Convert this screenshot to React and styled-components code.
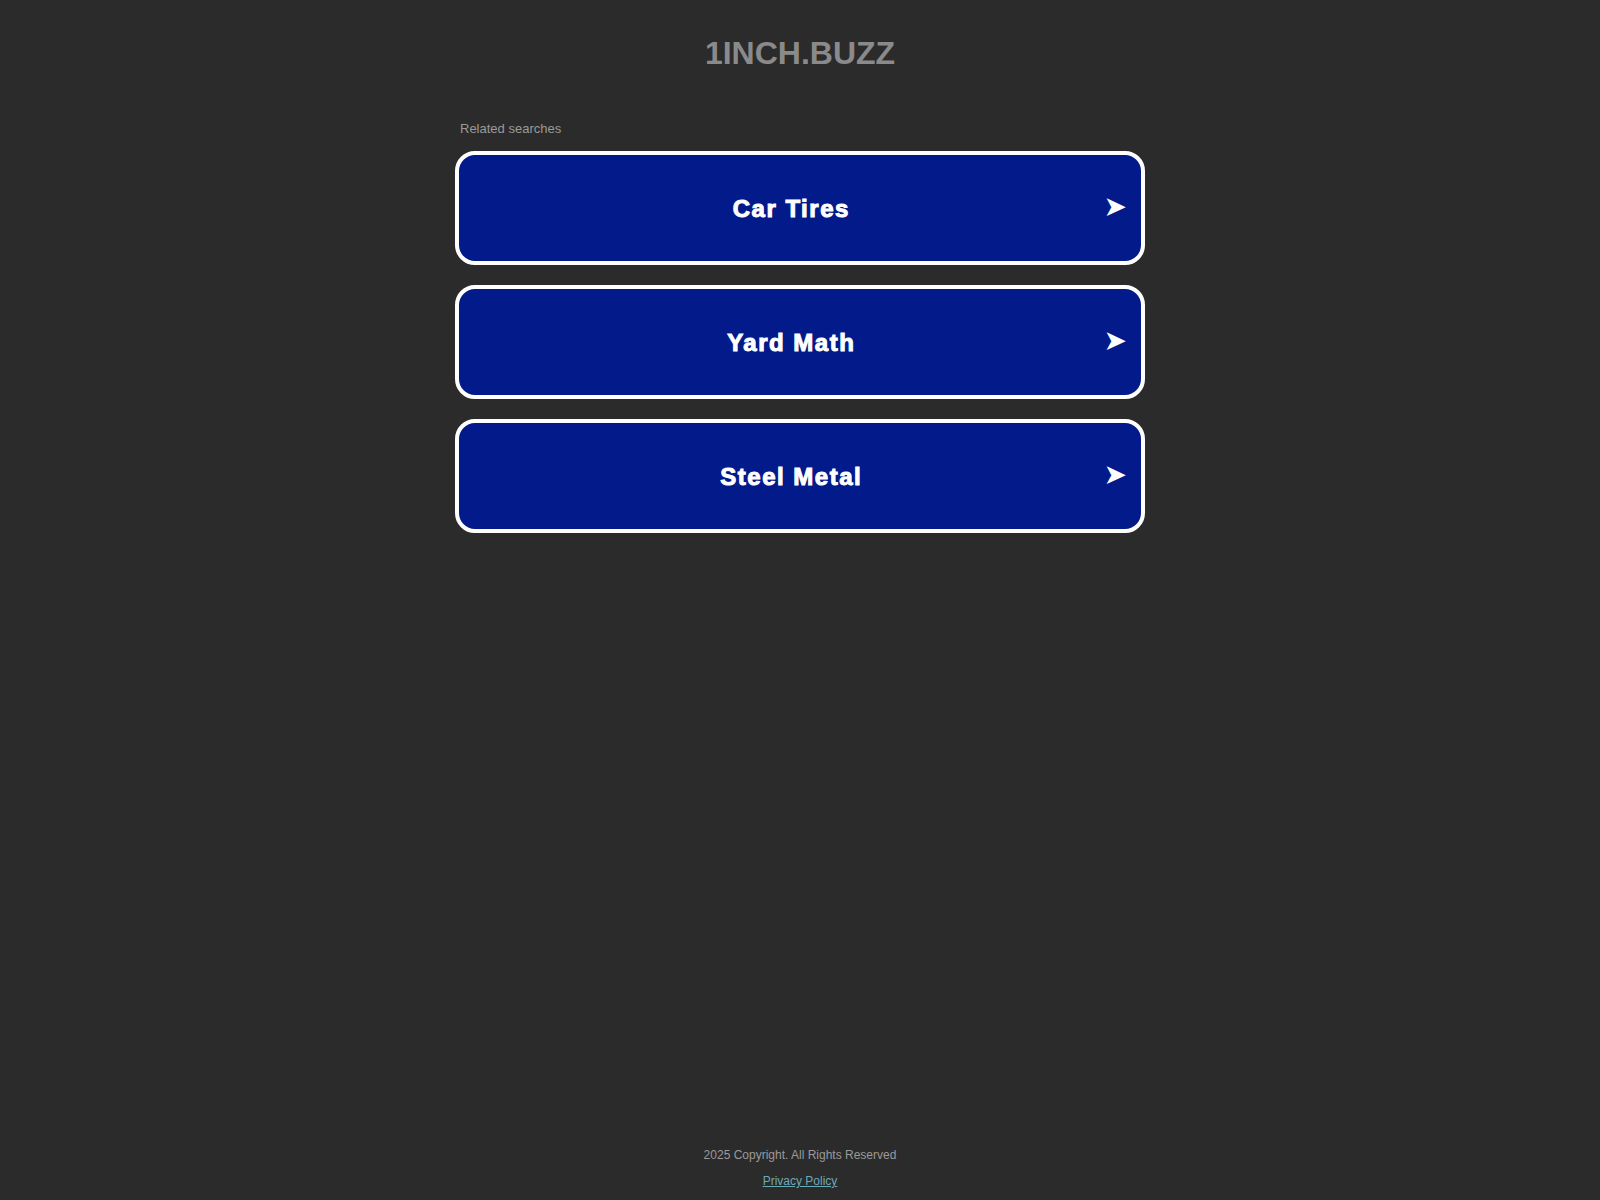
import React from "react";
import styled, { createGlobalStyle } from "styled-components";

const Global = createGlobalStyle`
  html, body { margin: 0; padding: 0; background: #2b2b2b; }
  body { font-family: "Liberation Sans", Arial, sans-serif; }
`;

const Page = styled.div`
  min-height: 1200px;
  display: flex;
  flex-direction: column;
  align-items: center;
  box-sizing: border-box;
`;

const Title = styled.h1`
  margin: 35px 0 0;
  font-size: 32px;
  line-height: 37px;
  font-weight: 700;
  color: #8a8a8a;
`;

const Main = styled.main`
  width: 690px;
  margin-top: 49px;
  display: flex;
  flex-direction: column;
`;

const Label = styled.div`
  font-size: 13px;
  line-height: 15px;
  color: #9a9a9a;
  padding-left: 5px;
  margin-bottom: 15px;
`;

const List = styled.div`
  display: flex;
  flex-direction: column;
  gap: 20px;
`;

const Item = styled.a`
  display: flex;
  align-items: center;
  height: 114px;
  box-sizing: border-box;
  border: 4px solid #ffffff;
  border-radius: 20px;
  background: #021a8a;
  color: #ffffff;
  text-decoration: none;
  padding: 2px 14px 0 20px;
`;

const ItemText = styled.span`
  flex: 1;
  text-align: center;
  font-size: 24px;
  font-weight: 700;
  letter-spacing: 1.5px;
  -webkit-text-stroke: 1px #ffffff;
`;

const Arrow = styled.span`
  font-size: 28px;
  line-height: 1;
  color: #ffffff;
  font-family: "DejaVu Sans", sans-serif;
  margin-top: -4px;
`;

const Footer = styled.footer`
  margin-top: auto;
  display: flex;
  flex-direction: column;
  align-items: center;
  gap: 12px;
  padding-bottom: 12px;
  font-size: 12px;
  line-height: 14px;
  color: #9a9a9a;
`;

const FooterLink = styled.a`
  color: #6aaab8;
  text-decoration: underline;
`;

const items = ["Car Tires", "Yard Math", "Steel Metal"];

export default function App() {
  return (
    <>
      <Global />
      <Page>
        <Title>1INCH.BUZZ</Title>
        <Main>
          <Label>Related searches</Label>
          <List>
            {items.map((t) => (
              <Item key={t} href="#">
                <ItemText>{t}</ItemText>
                <Arrow>➤</Arrow>
              </Item>
            ))}
          </List>
        </Main>
        <Footer>
          <div>2025 Copyright. All Rights Reserved</div>
          <FooterLink href="#">Privacy Policy</FooterLink>
        </Footer>
      </Page>
    </>
  );
}
